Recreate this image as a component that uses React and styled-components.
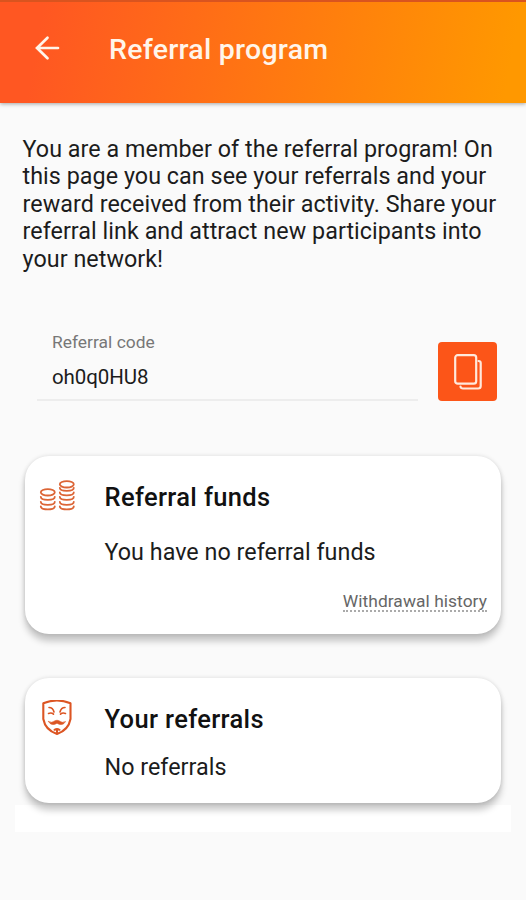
import styled, { createGlobalStyle } from "styled-components";

const GlobalStyle = createGlobalStyle`
  * {
    box-sizing: border-box;
  }

  body {
    margin: 0;
    background: #fafafa;
    color: #1c1c1c;
    font-family: Roboto, "Liberation Sans", sans-serif;
  }

  h1, h2, p {
    margin: 0;
  }
`;

const Screen = styled.div`
  width: 526px;
  height: 900px;
  display: flex;
  flex-direction: column;
  overflow: hidden;
`;

const AppBar = styled.header`
  flex: none;
  height: 103px;
  padding: 0 0 5px 34px;
  display: flex;
  align-items: center;
  gap: 49px;
  color: #fff5ea;
  background: linear-gradient(100deg, #ff5722 8%, #ff9800 96%);
  border-top: 2px solid #d9541f;
  box-shadow: 0 1px 4px rgba(0, 0, 0, 0.35);
`;

const BackButton = styled.button`
  width: 26px;
  height: 26px;
  margin-bottom: 4px;
  padding: 0;
  border: 0;
  background: none;
  color: inherit;
  display: flex;
`;

const Title = styled.h1`
  font-size: 28.5px;
  line-height: 34px;
  font-weight: 500;
  letter-spacing: 0.25px;
`;

const Intro = styled.p`
  margin: 33px 24px 0 22.5px;
  font-size: 23.3px;
  line-height: 27.4px;
  letter-spacing: 0.05px;
`;

const CodeRow = styled.div`
  margin: 51px 29px 0 37px;
  display: flex;
  justify-content: space-between;
  align-items: flex-end;
`;

const CodeField = styled.div`
  width: 381px;
  height: 77px;
  padding: 7px 15px 0;
  border-bottom: 2px solid #ededed;
`;

const CodeLabel = styled.div`
  font-size: 17.4px;
  line-height: 22px;
  letter-spacing: 0.02px;
  color: #777;
`;

const CodeValue = styled.div`
  margin-top: 12px;
  font-size: 20.5px;
  line-height: 24px;
  letter-spacing: -0.1px;
`;

const CopyButton = styled.button`
  width: 59px;
  height: 59px;
  padding: 0;
  border: 0;
  border-radius: 4px;
  background: #fc5518;
  display: flex;
  align-items: center;
  justify-content: center;
`;

const Cards = styled.main`
  margin: 55px 15px 0;
  padding: 0 10px 29px;
  display: flex;
  flex-direction: column;
  gap: 44px;
  background: linear-gradient(#fff, #fff) bottom / 100% 27px no-repeat;
`;

const Card = styled.section`
  height: ${({ $height }) => $height}px;
  padding: 24px 14px 0;
  display: grid;
  grid-template-columns: 36px 1fr;
  grid-template-rows: 35px auto 1fr;
  column-gap: 29.5px;
  border-radius: 24px;
  background: #fff;
  box-shadow: 0 7px 7px rgba(0, 0, 0, 0.22), 0 0 4px rgba(0, 0, 0, 0.13);

  > svg {
    display: block;
    margin-top: -2px;
  }
`;

const CardTitle = styled.h2`
  font-size: 25.5px;
  line-height: 35px;
  font-weight: 500;
  letter-spacing: 0.35px;
  color: #111;
`;

const CardText = styled.p`
  grid-column: 2;
  margin-top: ${({ $gap }) => $gap}px;
  font-size: 23.3px;
  line-height: 28px;
  letter-spacing: 0.03px;
`;

const HistoryLink = styled.a`
  grid-column: 1 / -1;
  justify-self: end;
  align-self: end;
  margin-bottom: 22px;
  font-size: 17.4px;
  line-height: 18px;
  letter-spacing: 0.05px;
  color: #666;
  border-bottom: 2px dotted #aaa;
`;

const ArrowIcon = () => (
  <svg width="26" height="26" viewBox="0 0 26 26" fill="none" stroke="currentColor" strokeWidth="2.7" strokeLinecap="round">
    <path d="M24 13H3.5M13.5 2.8L3 13l10.5 10.2" />
  </svg>
);

const CopyIcon = () => (
  <svg width="30" height="38" viewBox="0 0 30 38" fill="none" stroke="#ffe9dc" strokeWidth="2.2" strokeLinecap="round">
    <rect x="2.2" y="2.2" width="21" height="28.5" rx="2.5" />
    <path d="M25.5 8c1.7 0 2.2 1 2.2 2v23q0 2.500-2.500 2.500H10c-1.500 0-2.500-.8-2.500-2" />
  </svg>
);

const stacks = [
  { x: 8.8, rim: 14.3, edges: [18.8, 23.8, 28.3] },
  { x: 27.8, rim: 6.3, edges: [9.8, 14.3, 18.8, 23.8, 28.3] },
];

const CoinsIcon = () => (
  <svg width="36" height="36" viewBox="0 0 36 36" fill="none" stroke="#dc6536" strokeWidth="1.8" strokeLinecap="round">
    {stacks.map(({ x, rim, edges }) => (
      <g key={x}>
        <ellipse cx={x} cy={rim} rx="7" ry="3.2" />
        {edges.map((y) => (
          <path key={y} d={`M${x - 7} ${y}c0 4.2 14 4.2 14 0`} />
        ))}
      </g>
    ))}
  </svg>
);

const MaskIcon = () => (
  <svg width="36" height="38" viewBox="0 0 36 38" fill="none" stroke="#dc5523" strokeWidth="2.1" strokeLinecap="round" strokeLinejoin="round">
    <path d="M4.300 3.200Q18 -2.200 31.500 3.200V19Q29.500 30 18 34Q6.300 30 4.300 19Z" />
    <path d="M10 7.500q4 0 5 4.500M26 7.500q-4 0-5 4.500" strokeWidth="1.6" />
    <path d="M9.500 13.500q3-1.200 5 .7M26.500 13.500q-3-1.200-5 .7" strokeWidth="1.6" />
    <path d="M9.500 21.500q3 2 6.500-.7q2-1.200 4 0q3.500 2.700 6.500.7q-2 4-6.500 2.700l-2-1-2 1q-4.500 1.300-6.500-2.700Z" fill="#dc5523" strokeWidth=".6" />
    <path d="M15.500 29.800q2.500-1.500 5 0M18 29v3.500" strokeWidth="2" />
  </svg>
);

export default function App() {
  return (
    <>
      <GlobalStyle />
      <Screen>
        <AppBar>
          <BackButton type="button" aria-label="Back">
            <ArrowIcon />
          </BackButton>
          <Title>Referral program</Title>
        </AppBar>
        <Intro>
          You are a member of the referral program! On this page you can see your referrals and your
          reward received from their activity. Share your referral link and attract new participants
          into your network!
        </Intro>
        <CodeRow>
          <CodeField>
            <CodeLabel>Referral code</CodeLabel>
            <CodeValue>oh0q0HU8</CodeValue>
          </CodeField>
          <CopyButton type="button" aria-label="Copy code">
            <CopyIcon />
          </CopyButton>
        </CodeRow>
        <Cards>
          <Card $height={178}>
            <CoinsIcon />
            <CardTitle>Referral funds</CardTitle>
            <CardText $gap={23}>You have no referral funds</CardText>
            <HistoryLink>Withdrawal history</HistoryLink>
          </Card>
          <Card $height={125}>
            <MaskIcon />
            <CardTitle>Your referrals</CardTitle>
            <CardText $gap={16}>No referrals</CardText>
          </Card>
        </Cards>
      </Screen>
    </>
  );
}
